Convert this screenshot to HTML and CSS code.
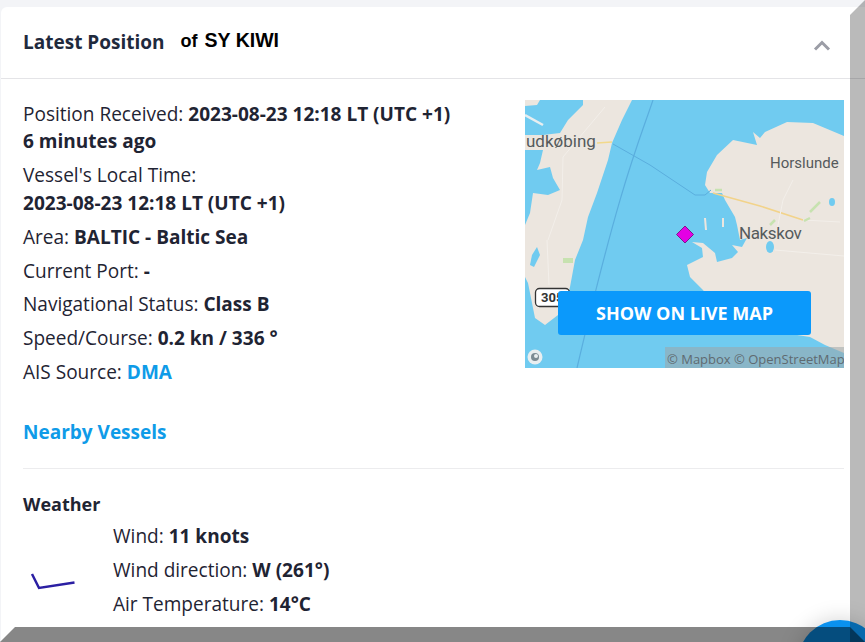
FILE: index.html
```html
<!DOCTYPE html>
<html lang="en">
<head>
<meta charset="utf-8">
<title>Latest Position of SY KIWI</title>
<link rel="stylesheet" href="styles.css">
</head>
<body>
<div class="stage">
  <section class="card">
    <header class="card-head">
      <h2 class="card-title">Latest Position</h2>
      <span class="vessel"><span class="vessel-of">of</span>SY KIWI</span>
      <svg class="chevron" width="18" height="11" viewBox="0 0 18 11"><path d="M2 9.5 9 2.5l7 7" fill="none" stroke="#9b9da6" stroke-width="3"/></svg>
    </header>
    <div class="card-body">
      <div class="top-row">
        <div class="info">
          <p class="row">Position Received: <b>2023-08-23 12:18 LT (UTC +1)</b><br><b>6 minutes ago</b></p>
          <p class="row">Vessel's Local Time:<br><b>2023-08-23 12:18 LT (UTC +1)</b></p>
          <p class="row">Area: <b>BALTIC - Baltic Sea</b></p>
          <p class="row">Current Port: <b>-</b></p>
          <p class="row">Navigational Status: <b>Class B</b></p>
          <p class="row">Speed/Course: <b>0.2 kn / 336 °</b></p>
          <p class="row">AIS Source: <a class="link" href="#">DMA</a></p>
          <p class="nearby"><a class="link" href="#">Nearby Vessels</a></p>
        </div>
        <div class="map">
          <svg class="map-art" width="319" height="268" viewBox="0 0 319 268">
            <rect width="319" height="268" fill="#70cbf0"/>
            <path d="M58 0H107L97 20 87 43 83 60 72 93 63 117 58 140 50 160 45 187 40 205 33 215 20 225 10 218 7 203 3 183 0 177V125L5 113 8 93 23 95 35 90 28 78 25 67 12 70 15 63 18 50H0V35H18L35 33 43 20 58 5Z" fill="#ece6df"/>
            <path d="M0 0H15L12 5 0 6Z" fill="#ece6df"/>
            <path d="M0 15 18 25" stroke="#e8eef0" stroke-width="2.500" fill="none"/>
            <path d="M12 147 15 155 9 167 5 165 7 155Z" fill="#70cbf0"/>
            <path d="M319 36 288 23 262 22 240 32 235 38 228 32 232 45 208 40 192 55 182 72 180 85 185 93 197 93 200 100 210 117 212 125 215 140 222 138 217 147 207 145 213 152 207 158 192 162 190 153 178 143 167 142 177 148 178 157 162 165 165 177 178 190 195 215 240 230 285 237 300 245 319 253Z" fill="#ece6df"/>
            <path d="M128 0C114 42 96 80 52 268" stroke="#5aaede" stroke-width="1.200" fill="none"/>
            <path d="M88 44 125 65 170 95 180 95 186 90" stroke="#5aaede" stroke-width="1" fill="none"/>
            <path d="M72 43 87 42" stroke="#f2d98b" stroke-width="1.500" fill="none"/>
            <path d="M188 93 235 106 278 120" stroke="#f2d38a" stroke-width="1.500" fill="none"/>
            <path d="M278 120 315 122M268 80 258 100 252 130M250 150 319 156" stroke="#f3efea" stroke-width="1" fill="none"/>
            <path d="M80 7 38 57 37 100 23 140M22 140 24 185" stroke="#f3efea" stroke-width="1" fill="none"/>
            <path d="M190 90 197 90M285 112 295 102M245 125 250 120M279 121 285 118" stroke="#c7e2b0" stroke-width="2.500" fill="none"/>
            <path d="M38 158h10v5h-10z" fill="#c7e2b0"/>
            <ellipse cx="307" cy="102" rx="3" ry="4" fill="#70cbf0"/>
            <ellipse cx="245" cy="147" rx="4" ry="6" fill="#70cbf0"/>
            <path d="M179 118 181 118 182 130 180 130Z M197 118 199 118 199 127 197 127Z" fill="#ece6df"/>
            <text class="map-label city" x="1" y="47">udkøbing</text>
            <text class="map-label town" x="245" y="68">Horslunde</text>
            <text class="map-label city nakskov" x="214" y="139">Nakskov</text>
            <rect x="10.500" y="188.500" width="34" height="18" rx="4" fill="#fff" stroke="#333" stroke-width="1.300"/>
            <text class="map-shield" x="16" y="202">305</text>
            <rect x="140" y="247" width="179" height="21" fill="#9fa6a8" fill-opacity=".55"/>
            <text class="map-credit" x="142" y="264">© Mapbox © OpenStreetMap</text>
            <circle cx="10" cy="257" r="7.500" fill="#e8eef0"/>
            <circle cx="10" cy="257" r="4" fill="#7b8b93"/>
            <circle cx="11" cy="256" r="2" fill="#e8eef0"/>
            <path d="M160 126 168.500 134.500 160 143 151.500 134.500Z" fill="#e400e4" stroke="#7d1a8c" stroke-width="1"/>
          </svg>
          <a class="live-btn" href="#">SHOW ON LIVE MAP</a>
        </div>
      </div>
      <hr class="rule">
      <h3 class="weather-title">Weather</h3>
      <div class="weather">
        <svg class="wind" width="90" height="102" viewBox="0 0 90 102"><path d="M9 51 16 65 51.500 59.500" fill="none" stroke="#2b1fa3" stroke-width="2.500"/></svg>
        <div class="weather-rows">
          <p class="row">Wind: <b>11 knots</b></p>
          <p class="row">Wind direction: <b>W (261°)</b></p>
          <p class="row">Air Temperature: <b>14°C</b></p>
        </div>
      </div>
    </div>
  </section>
  <div class="chat"></div>
  <div class="bevel-right"></div>
  <div class="bevel-bottom"></div>
</div>
</body>
</html>
```
FILE: styles.css
```css
* { box-sizing: border-box; }
html, body { margin: 0; padding: 0; overflow: hidden; }
body { font-family: "Open Sans", sans-serif; color: #1f2433; }
.stage {
  position: relative;
  width: 865px;
  height: 642px;
  overflow: hidden;
  background: #f3f4f7;
  padding: 7px 0 0 1px;
}
.card {
  background: #fff;
  border-radius: 6px 0 0 0;
  height: 100%;
}
.card-head {
  display: flex;
  align-items: center;
  height: 72px;
  padding: 0 34px 0 22px;
  border-bottom: 1px solid #e4e4e7;
}
.card-title {
  margin: 0 0 2px;
  font-size: 19px;
  font-weight: 700;
  color: #1f2a3d;
}
.vessel {
  margin-left: 16px;
  margin-bottom: 4px;
  font-family: "Liberation Sans", sans-serif;
  font-weight: 700;
  font-size: 19.500px;
  color: #000;
}
.vessel-of { font-size: 18px; margin-right: 7px; }
.chevron { margin-left: auto; margin-top: 6px; }
.card-body { padding: 22px 21px 0 22px; }
.top-row { display: flex; justify-content: space-between; align-items: flex-start; }
.row {
  margin: 0 0 6.500px;
  font-size: 19.050px;
  line-height: 27.400px;
}
.row b { font-weight: 700; }
.weather-rows .row { margin-bottom: 6.900px; }
.link { color: #0f9be8; font-weight: 700; text-decoration: none; }
.nearby { margin: 32px 0 0; font-size: 19px; line-height: 27px; }
.map { position: relative; width: 319px; height: 268px; margin-top: -1px; flex: none; }
.map-art { display: block; }
.map-label { font-family: "Roboto", sans-serif; font-weight: 400; fill: #555a5c; }
.city { font-size: 17px; }
.nakskov { letter-spacing: -.4px; }
.town { font-size: 15px; }
.map-shield { font-family: "Roboto", sans-serif; font-weight: 700; font-size: 13px; fill: #333; }
.map-credit { font-family: "Open Sans", sans-serif; font-size: 13px; fill: #5f6a70; }
.live-btn {
  position: absolute;
  left: 33px;
  top: 191px;
  width: 253px;
  height: 44px;
  display: flex;
  align-items: center;
  justify-content: center;
  border-radius: 3px;
  background: #0b99fb;
  color: #fff;
  font-size: 18px;
  font-weight: 700;
  text-decoration: none;
}
.rule { margin: 22px 0 0; border: 0; border-top: 1px solid #ececee; }
.weather-title { margin: 22px 0 0; font-size: 18px; line-height: 27px; font-weight: 700; }
.weather { display: flex; margin-top: 5px; }
.wind { flex: none; }
.weather-rows { flex: none; }
.chat {
  position: absolute;
  left: 798px;
  top: 620px;
  width: 84px;
  height: 84px;
  border-radius: 50%;
  background: #0a91ee;
  box-shadow: 0 0 22px rgba(0, 0, 0, .18);
}
.bevel-right {
  position: absolute;
  right: 0;
  top: 0;
  bottom: 0;
  width: 15px;
  background: rgba(0, 0, 0, .27);
  clip-path: polygon(100% 0, 100% 100%, 0 100%, 0 15px);
}
.bevel-bottom {
  position: absolute;
  left: 0;
  right: 0;
  bottom: 0;
  height: 15px;
  background: rgba(0, 0, 0, .47);
  clip-path: polygon(15px 0, calc(100% - 15px) 0, 100% 100%, 0 100%);
}
```
